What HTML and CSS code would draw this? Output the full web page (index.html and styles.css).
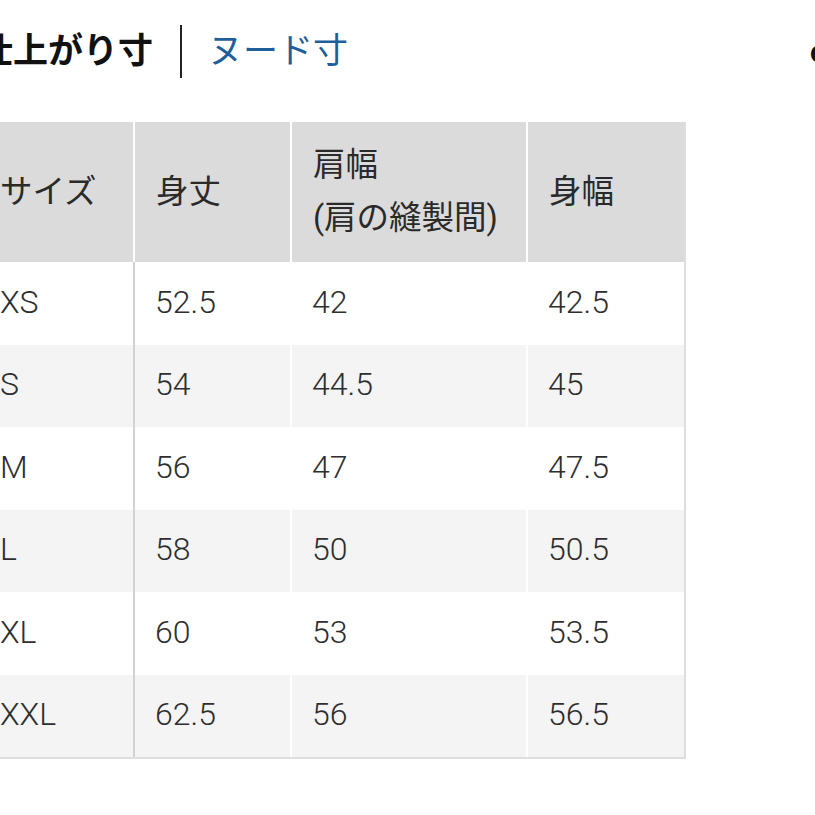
FILE: index.html
```html
<!DOCTYPE html>
<html lang="ja">
<head>
<meta charset="utf-8">
<link rel="stylesheet" href="styles.css">
</head>
<body>
<div class="page">
  <div class="tabs">
    <span class="tab active">仕上がり寸</span>
    <span class="divider"></span>
    <span class="tab link">ヌード寸</span>
    <span class="unit">cm</span>
  </div>
  <table class="size-table">
    <colgroup>
      <col class="c1"><col class="c2"><col class="c3"><col class="c4">
    </colgroup>
    <thead>
      <tr>
        <th>サイズ</th>
        <th>身丈</th>
        <th>肩幅<br>(肩の縫製間)</th>
        <th>身幅</th>
      </tr>
    </thead>
    <tbody>
      <tr><td>XS</td><td>52.5</td><td>42</td><td>42.5</td></tr>
      <tr><td>S</td><td>54</td><td>44.5</td><td>45</td></tr>
      <tr><td>M</td><td>56</td><td>47</td><td>47.5</td></tr>
      <tr><td>L</td><td>58</td><td>50</td><td>50.5</td></tr>
      <tr><td>XL</td><td>60</td><td>53</td><td>53.5</td></tr>
      <tr><td>XXL</td><td>62.5</td><td>56</td><td>56.5</td></tr>
    </tbody>
  </table>
</div>
</body>
</html>
```
FILE: styles.css
```css
html, body {
  margin: 0;
  padding: 0;
  overflow: hidden;
  background: #fff;
}
body {
  font-family: Roboto, "Noto Sans CJK JP", "Noto Sans", sans-serif;
  color: #333;
}
.page {
  margin-left: -22px;
  width: 900px;
}
.tabs {
  display: flex;
  align-items: center;
  height: 102px;
  white-space: nowrap;
}
.tab {
  font-size: 35px;
  line-height: 1;
}
.tab.active {
  font-weight: 700;
  color: #111;
}
.tab.link {
  color: #1f5f99;
}
.divider {
  width: 2px;
  height: 53px;
  background: #222;
  margin: 0 26px 0 27px;
}
.unit {
  margin-left: 462px;
  font-size: 30px;
  font-weight: 700;
  color: #111;
}
.size-table {
  margin-top: 20px;
  width: 708px;
  table-layout: fixed;
  border-collapse: separate;
  border-spacing: 0;
  border-right: 2px solid #dedede;
  border-bottom: 2px solid #dedede;
}
.size-table .c1 { width: 157px; }
.size-table .c2 { width: 157px; }
.size-table .c3 { width: 236px; }
.size-table .c4 { width: 156px; }
.size-table th {
  background: #dbdbdb;
  font-weight: 400;
  font-size: 32.5px;
  line-height: 53px;
  text-align: left;
  height: 140px;
  box-sizing: border-box;
  padding: 0 18px 0 21px;
  border-right: 2px solid #fff;
  color: #2a2a2a;
}
.size-table th:first-child,
.size-table td:first-child {
  padding-left: 22px;
}
.size-table th:last-child,
.size-table td:last-child {
  border-right: 0;
}
.size-table td {
  height: 82.5px;
  box-sizing: border-box;
  padding: 0 20px 3px 20px;
  font-size: 32px;
  font-weight: 300;
  border-right: 2px solid #fff;
  vertical-align: middle;
  color: #2e2e2e;
}
.size-table td:first-child {
  border-right-color: #d2d2d2;
}
.size-table tbody tr:nth-child(even) td {
  background: #f4f4f4;
}
```
